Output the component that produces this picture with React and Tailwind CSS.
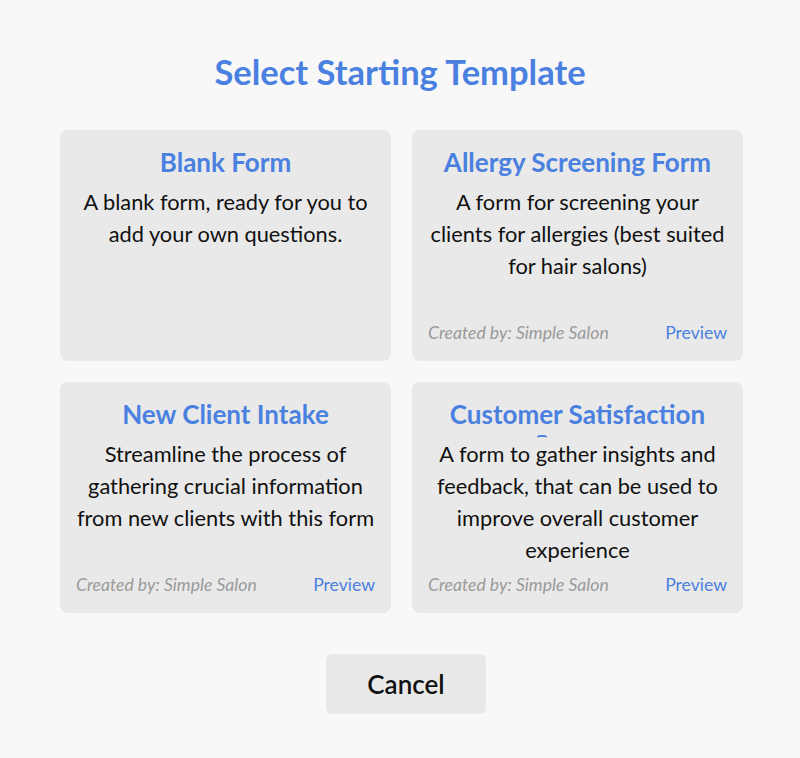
import React from 'react';

const templates = [
  {
    title: 'Blank Form',
    description: 'A blank form, ready for you to add your own questions.',
    author: null,
  },
  {
    title: 'Allergy Screening Form',
    description: 'A form for screening your clients for allergies (best suited for hair salons)',
    author: 'Simple Salon',
  },
  {
    title: 'New Client Intake',
    description: 'Streamline the process of gathering crucial information from new clients with this form',
    author: 'Simple Salon',
  },
  {
    title: 'Customer Satisfaction',
    description: 'A form to gather insights and feedback, that can be used to improve overall customer experience',
    author: 'Simple Salon',
    spinner: true,
  },
];

const TemplateCard = ({ template }) => {
  return (
    <div className="relative flex h-[231px] flex-col rounded-lg bg-[#e9e9e9] px-3 pt-4 pb-4 text-center">
      <h2 className="text-[26px] leading-8 font-bold text-[#4a80e0]">{template.title}</h2>
      <p className="mt-2 text-[21.8px] leading-8 text-[#111]">{template.description}</p>
      {template.spinner && (
        <span className="absolute top-[53px] left-[125px] h-[3px] w-[10px] rounded-t-full border-t-2 border-[#4a80e0]" />
      )}
      {template.author && (
        <div className="mt-auto flex items-center justify-between px-1 text-[17.6px] leading-6">
          <span className="italic text-[#9a9a9a]">Created by: {template.author}</span>
          <span className="text-[#4a80e0]">Preview</span>
        </div>
      )}
    </div>
  );
}

export default function App() {
  return (
    <div
      className="min-h-[758px] bg-[#f8f8f8] pt-[50px]"
      style={{ fontFamily: 'Lato, "Open Sans", sans-serif' }}
    >
      <h1 className="text-center text-[34.5px] leading-[44px] font-bold text-[#4a80e0]">
        Select Starting Template
      </h1>
      <div className="mt-[36px] ml-[60px] grid w-[683px] grid-cols-2 gap-[21px]">
        {templates.map((t) => (
          <TemplateCard key={t.title} template={t} />
        ))}
      </div>
      <div className="mt-[41px] flex justify-center pl-[12px]">
        <button className="h-[60px] w-[160px] rounded-md bg-[#e9e9e9] text-[26px] font-semibold text-[#111]">
          Cancel
        </button>
      </div>
    </div>
  );
}
